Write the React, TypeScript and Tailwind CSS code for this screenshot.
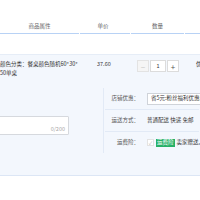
const font = {
  fontFamily: '"Noto Sans CJK SC", "Noto Sans", sans-serif',
};

const HeaderCell = ({
  label,
  className,
}: {
  label: string;
  className: string;
}) => {
  return (
    <div
      className={`flex h-full items-end justify-center border-b border-[#b8d2f5] pb-[3px] leading-[7px] text-[#666] ${className}`}
    >
      {label}
    </div>
  );
};

const FormRow = ({
  label,
  children,
  bordered,
}: {
  label: string;
  children: React.ReactNode;
  bordered?: boolean;
}) => {
  return (
    <div
      className={`flex flex-1 items-center ${
        bordered ? "border-b border-[#e2eaf6]" : ""
      }`}
    >
      <div className="w-[34px] shrink-0 text-right whitespace-nowrap text-[#555]">
        {label}
      </div>
      <div className="ml-[8px] flex flex-1 items-center">{children}</div>
    </div>
  );
};

export default function App() {
  return (
    <div
      className="h-[200px] w-[200px] overflow-hidden bg-white text-[5.5px] leading-[7px] text-[#333]"
      style={font}
    >
      <div className="flex h-[34px]">
        <HeaderCell label="商品属性" className="mr-[1px] w-[79px]" />
        <HeaderCell label="单价" className="mr-[1px] w-[50px] pr-[4px]" />
        <HeaderCell label="数量" className="mr-[1px] w-[53px]" />
        <HeaderCell label="" className="flex-1" />
      </div>

      <div className="h-[20px]" />

      <div className="flex h-[34px] border-t border-[#e6edf7] bg-[#f3f7fd]">
        <div className="w-[80px] shrink-0 pt-[5px] leading-[9px] whitespace-nowrap">
          颜色分类：餐桌颜色随机60*30*
          <br />
          50单桌
        </div>
        <div className="w-[57px] shrink-0 pl-[17px] pt-[5px] leading-[9px]">37.60</div>
        <div className="flex h-[17px] shrink-0 items-start pt-[5px]">
          <div className="flex h-[12px] w-[12px] items-center justify-center border border-[#e3e3e3] bg-[#f5f5f5] text-[8px] text-[#c8c8c8]">
            −
          </div>
          <div className="ml-[1px] flex h-[12px] w-[16px] items-center justify-center border border-[#dcdcdc] bg-white">
            1
          </div>
          <div className="ml-[1px] flex h-[12px] w-[12px] items-center justify-center border border-[#dcdcdc] bg-white text-[8px] text-[#555]">
            +
          </div>
        </div>
        <div className="ml-[17px] shrink-0 pt-[5px] leading-[9px]">优</div>
      </div>

      <div className="border-b border-[#dce6f5] bg-[#f3f7fd]">
        <div className="flex h-[65px]">
          <div className="w-[104px] shrink-0 border-r border-[#e2eaf6] pt-[28px]">
            <div className="relative ml-[-2px] h-[19px] w-[71px] rounded-[1px] border border-[#d6d9de] bg-white">
              <span className="absolute right-[3px] bottom-[1px] text-[#a8a8a8]">
                0/200
              </span>
            </div>
          </div>
          <div className="flex w-[95px] shrink-0 flex-col pl-[1px]">
            <FormRow label="店铺优惠：" bordered>
              <div className="flex h-[12px] w-[60px] shrink-0 items-center overflow-hidden whitespace-nowrap border border-[#cfd3d9] bg-white pl-[3px]">
                省5元:粉丝福利优惠券
              </div>
            </FormRow>
            <FormRow label="运送方式：" bordered>
              <span className="whitespace-nowrap">普通配送 快递 免邮</span>
            </FormRow>
            <FormRow label="运费险：">
              <div className="flex h-[7px] w-[7px] shrink-0 items-center justify-center border border-[#e3e3e3] bg-white text-[5px] text-[#b5b5b5]">
                ✓
              </div>
              <div className="ml-[2px] flex h-[8px] shrink-0 items-center bg-[#27b067] px-[1px] text-white">
                运费险
              </div>
              <span className="ml-[2px] whitespace-nowrap">卖家赠送,</span>
            </FormRow>
          </div>
        </div>
        <div className="h-[22px]" />
      </div>
    </div>
  );
}
